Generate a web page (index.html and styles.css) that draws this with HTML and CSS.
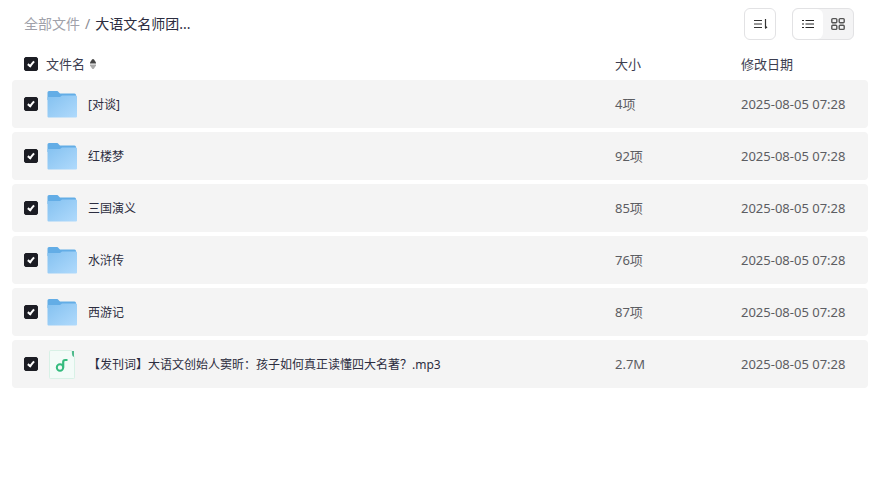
FILE: index.html
```html
<!DOCTYPE html>
<html lang="zh-CN">
<head>
    <meta charset="UTF-8">
    <meta name="viewport" content="width=device-width, initial-scale=1.0">
    <title>大语文名师团</title>
    <link rel="stylesheet" href="styles.css">
</head>
<body>
    <!-- 共用图标 -->
    <svg class="icon-defs" aria-hidden="true">
        <defs>
            <linearGradient id="folder-front" x1="0" y1="0" x2="1" y2="1">
                <stop offset="0" stop-color="#84c1f0"/>
                <stop offset="1" stop-color="#b0dafc"/>
            </linearGradient>
        </defs>
        <symbol id="icon-folder" viewBox="0 0 32 32">
            <path d="M1.500 4.500Q1.500 3 3 3H11Q12 3 12.500 4L14 5.500H28.500Q30 5.500 30 7V12H1.500Z" fill="#63ade6"/>
            <path d="M1.500 9.500Q1.500 9 2 9H14L16 7.500H30Q31 7.500 31 8.500V28.500Q31 29.500 30 29.500H2.500Q1.500 29.500 1.500 28.500Z" fill="url(#folder-front)"/>
        </symbol>
        <symbol id="icon-audio" viewBox="0 0 32 32">
            <path d="M5 2.500H25.500Q26 8 28.500 8.500V29.500Q28.500 30.500 27.500 30.500H4.500Q3.500 30.500 3.500 29.500V3.500Q3.500 2.500 5 2.500Z" fill="#f3fbf8" stroke="#d8f1e6"/>
            <path d="M26 3H28V9Q26 8.500 26 6Z" fill="#4fba8c"/>
            <circle cx="14" cy="19.500" r="3.200" fill="none" stroke="#35bb7e" stroke-width="2"/>
            <path d="M17.200 19.500V14Q17.200 12 19.200 12H21.500" fill="none" stroke="#35bb7e" stroke-width="2.200"/>
        </symbol>
    </svg>

    <header class="toolbar">
        <nav class="breadcrumb" aria-label="路径">
            <a href="#" class="crumb-link">全部文件</a>
            <span class="crumb-sep">/</span>
            <span class="crumb-current">大语文名师团...</span>
        </nav>
        <div class="actions">
            <button type="button" class="sort-btn" aria-label="排序">
                <svg width="16" height="16" viewBox="0 0 16 16" fill="none" stroke="#333" stroke-width="1.200">
                    <path d="M2 4.500H10M2 8H10M2 11.500H10M13.500 3V12"/>
                    <path d="M13 13V9L15.500 11.500Z" fill="#333" stroke="none"/>
                </svg>
            </button>
            <div class="view-switch">
                <button type="button" class="view-btn active" aria-label="列表">
                    <svg width="16" height="16" viewBox="0 0 16 16" fill="none" stroke="#222" stroke-width="1.200">
                        <path d="M2 4.500H4M2 8H4M2 11.500H4M5.500 4.500H14M5.500 8H14M5.500 11.500H14"/>
                    </svg>
                </button>
                <button type="button" class="view-btn" aria-label="网格">
                    <svg width="16" height="16" viewBox="0 0 16 16" fill="none" stroke="#555" stroke-width="1.400">
                        <rect x="1.800" y="2.600" width="5" height="4.200" rx="1"/>
                        <rect x="9.200" y="2.600" width="5" height="4.200" rx="1"/>
                        <rect x="1.800" y="9.200" width="5" height="4.200" rx="1"/>
                        <rect x="9.200" y="9.200" width="5" height="4.200" rx="1"/>
                    </svg>
                </button>
            </div>
        </div>
    </header>

    <main class="content">
        <table class="file-table">
            <thead>
                <tr>
                    <th class="col-check"><input type="checkbox" class="check" aria-label="全选" checked></th>
                    <th class="col-title" colspan="2">
                        <button type="button" class="sort-title">
                            文件名
                            <svg width="8" height="12" viewBox="0 0 8 12">
                                <path d="M1 5.500V4.500L3 1.500Q4 .500 5 1.500L7 4.500V5.500Z" fill="#444"/>
                                <path d="M1 6.500V7.500L3 10.500Q4 11.500 5 10.500L7 7.500V6.500Z" fill="#aaa"/>
                            </svg>
                        </button>
                    </th>
                    <th class="col-size">大小</th>
                    <th class="col-date">修改日期</th>
                </tr>
            </thead>
            <tbody>
                <tr>
                    <td class="col-check"><input type="checkbox" class="check" id="file1" checked></td>
                    <td class="col-icon"><svg class="file-icon"><use href="#icon-folder"/></svg></td>
                    <td class="col-name"><label for="file1">[对谈]</label></td>
                    <td class="col-size">4项</td>
                    <td class="col-date">2025-08-05 07:28</td>
                </tr>
                <tr>
                    <td class="col-check"><input type="checkbox" class="check" id="file2" checked></td>
                    <td class="col-icon"><svg class="file-icon"><use href="#icon-folder"/></svg></td>
                    <td class="col-name"><label for="file2">红楼梦</label></td>
                    <td class="col-size">92项</td>
                    <td class="col-date">2025-08-05 07:28</td>
                </tr>
                <tr>
                    <td class="col-check"><input type="checkbox" class="check" id="file3" checked></td>
                    <td class="col-icon"><svg class="file-icon"><use href="#icon-folder"/></svg></td>
                    <td class="col-name"><label for="file3">三国演义</label></td>
                    <td class="col-size">85项</td>
                    <td class="col-date">2025-08-05 07:28</td>
                </tr>
                <tr>
                    <td class="col-check"><input type="checkbox" class="check" id="file4" checked></td>
                    <td class="col-icon"><svg class="file-icon"><use href="#icon-folder"/></svg></td>
                    <td class="col-name"><label for="file4">水浒传</label></td>
                    <td class="col-size">76项</td>
                    <td class="col-date">2025-08-05 07:28</td>
                </tr>
                <tr>
                    <td class="col-check"><input type="checkbox" class="check" id="file5" checked></td>
                    <td class="col-icon"><svg class="file-icon"><use href="#icon-folder"/></svg></td>
                    <td class="col-name"><label for="file5">西游记</label></td>
                    <td class="col-size">87项</td>
                    <td class="col-date">2025-08-05 07:28</td>
                </tr>
                <tr>
                    <td class="col-check"><input type="checkbox" class="check" id="file6" checked></td>
                    <td class="col-icon"><svg class="file-icon"><use href="#icon-audio"/></svg></td>
                    <td class="col-name"><label for="file6">【发刊词】大语文创始人窦昕：孩子如何真正读懂四大名著？.mp3</label></td>
                    <td class="col-size">2.7M</td>
                    <td class="col-date">2025-08-05 07:28</td>
                </tr>
            </tbody>
        </table>
    </main>
</body>
</html>
```

FILE: styles.css
```css
* {
    box-sizing: border-box;
}
body {
    margin: 0;
    background: #fff;
    color: #2c2d40;
    font-family: "Noto Sans", "Noto Sans CJK SC", sans-serif;
    font-size: 13px;
    line-height: 20px;
}
button {
    margin: 0;
    padding: 0;
    border: 0;
    background: none;
    color: inherit;
    font: inherit;
    cursor: pointer;
}
.icon-defs {
    position: absolute;
    width: 0;
    height: 0;
}

/* 顶部 */
.toolbar {
    display: flex;
    align-items: center;
    justify-content: space-between;
    height: 48px;
    padding: 0 24px;
}
.breadcrumb {
    display: flex;
    gap: 5px;
    font-size: 14px;
}
.crumb-link {
    color: #a0a1aa;
    text-decoration: none;
}
.crumb-sep {
    color: #8a8b93;
}
.actions {
    display: flex;
    gap: 16px;
}
.sort-btn,
.view-switch {
    display: flex;
    align-items: center;
    justify-content: center;
    height: 32px;
    border: 1px solid #e2e2e4;
    border-radius: 6px;
}
.sort-btn {
    width: 32px;
}
.view-switch {
    background: #f4f4f5;
    overflow: hidden;
}
.view-btn {
    display: flex;
    align-items: center;
    justify-content: center;
    width: 30px;
    height: 30px;
}
.view-btn.active {
    background: #fff;
    border-radius: 6px;
}

/* 文件列表 */
.content {
    padding: 0 10px 0 12px;
}
.file-table {
    width: 100%;
    border-spacing: 0 4px;
}
th,
td {
    padding: 0;
    font-weight: normal;
    text-align: left;
    vertical-align: middle;
}
th {
    height: 24px;
    color: #3c3d50;
}
td {
    height: 48px;
    background: #f4f4f4;
    color: #5c5d62;
}
td:first-child {
    border-radius: 4px 0 0 4px;
}
td:last-child {
    border-radius: 0 4px 4px 0;
}
.col-check {
    width: 34px;
    padding-left: 12px;
}
.col-icon {
    width: 42px;
}
.col-name {
    padding-top: 2px;
    font-size: 12px;
    color: #2c2d40;
}
.col-size {
    width: 126px;
}
.col-date {
    width: 127px;
    white-space: nowrap;
}
.sort-title {
    display: flex;
    align-items: center;
    gap: 4px;
}
.file-icon {
    display: block;
    width: 32px;
    height: 32px;
}
.check {
    appearance: none;
    display: flex;
    align-items: center;
    justify-content: center;
    width: 14px;
    height: 14px;
    margin: 0;
    border: 1px solid #1c1d24;
    border-radius: 2px;
    cursor: pointer;
}
.check:checked {
    background: #1c1d24;
}
.check:checked::after {
    content: "";
    box-sizing: border-box;
    width: 4px;
    height: 7px;
    margin-bottom: 2px;
    border: solid #fff;
    border-width: 0 2px 2px 0;
    transform: rotate(40deg);
}
```
